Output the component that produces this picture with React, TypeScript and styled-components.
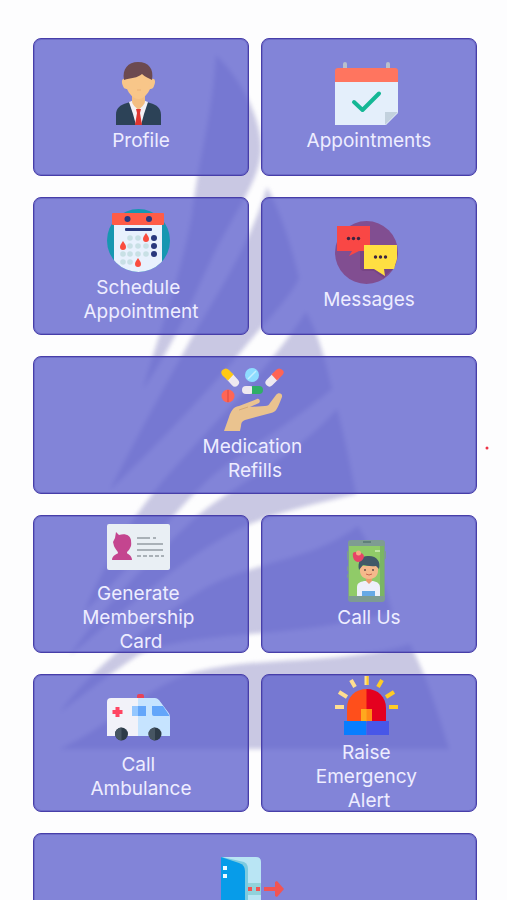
import React from "react";
import styled, { createGlobalStyle } from "styled-components";

const GlobalStyle = createGlobalStyle`
  *, *::before, *::after { box-sizing: border-box; }
  body { margin: 0; background: #fdfdfe; }
`;

const Page = styled.main`
  position: relative;
  isolation: isolate;
  height: 100vh;
  overflow-y: auto;
  scrollbar-width: none;
  padding: 38px 30px 38px 33px;
  font-family: Inter, "Noto Sans", sans-serif;
`;

const Watermark = styled.svg`
  position: absolute;
  inset: 0;
  z-index: -1;
  width: 100%;
  pointer-events: none;
`;

const Sails = styled.g`
  fill: #c9c8e3;
  filter: blur(2px);
`;

const MenuGrid = styled.nav`
  display: grid;
  grid-template-columns: repeat(2, minmax(0, 1fr));
  grid-auto-rows: 138px;
  gap: 21px 12px;
`;

const Tile = styled.button<{ $wide?: boolean }>`
  grid-column: ${({ $wide }) => ($wide ? "1 / -1" : "auto")};
  display: flex;
  align-items: center;
  justify-content: center;
  min-width: 0;
  padding: 0;
  border: 1px solid #473ea9;
  border-radius: 8px;
  background: rgba(95, 98, 205, 0.78);
  box-shadow: inset 0 0 0 1px rgba(71, 62, 169, 0.35);
  color: #eeedff;
  font: inherit;
  font-size: 19px;
  line-height: 24px;
  cursor: pointer;
`;

const TileLabel = styled.span`
  text-align: center;
  white-space: pre;
`;

const IconFrame = styled.svg`
  width: 63px;
  height: 63px;
  margin-bottom: 4px;
  vertical-align: bottom;
`;

function Icon({ children }: { children: React.ReactNode }) {
  return (
    <IconFrame viewBox="0 0 63 63" aria-hidden="true">
      {children}
    </IconFrame>
  );
}

const ProfileIcon = () => (
  <Icon>
    <path d="M9 63V53c0-7 4-10 11-12l6-2h11l6 2c7 2 11 5 11 12v10z" fill="#2c4257" />
    <path d="M22 40l5-2h9l5 2-4 12-3 11h-5l-3-11z" fill="#f4f1f6" />
    <path d="M25 33h13v6c0 4-4 6-6.500 9C29 45 25 43 25 39z" fill="#f3be82" />
    <path d="M29 47h5l-1 4 2 12h-7l2-12z" fill="#e0352f" />
    <path d="M18 17c-3-1-4 3-2 7 1 3 3 3 4 3 2 5 7 10 11.500 10S41 32 43 27c1 0 3 0 4-3 2-4 1-8-2-7l-4-7H22z" fill="#f8c689" />
    <path d="M17 18C15 7 21 0 31 0c11 0 16 7 14 18-3-2-7-3-10-6-4 4-12 4-18 6z" fill="#6c4a50" />
    <path d="M30 28h4" stroke="#eab074" strokeWidth="1" />
  </Icon>
);

const AppointmentsIcon = () => (
  <Icon>
    <path d="M8 8V2a2 2 0 0 1 4 0v6zM51 8V2a2 2 0 0 1 4 0v6z" fill="#b9bfcc" />
    <path d="M0 19h63v32L51 63H0z" fill="#e4effb" />
    <path d="M0 20V9q0-3 3-3h57q3 0 3 3v11z" fill="#ff755f" />
    <path d="M50 63V50h13z" fill="#c3d2de" />
    <path d="M19 40l8.500 8L44 31.500" fill="none" stroke="#14b795" strokeWidth="4" strokeLinecap="round" strokeLinejoin="round" />
  </Icon>
);

const scheduleDots: [number, number][] = [
  [23, 29], [31, 29], [23, 37], [31, 37], [39, 37], [16, 45],
  [23, 45], [31, 45], [39, 45], [16, 53], [23, 53],
];

const ScheduleIcon = () => (
  <Icon>
    <clipPath id="schedule-disc"><circle cx="31.500" cy="31.500" r="31.500" /></clipPath>
    <circle cx="31.500" cy="31.500" r="31.500" fill="#1697b1" />
    <path d="M7 12h48v51H7z" fill="#e8f1fd" clipPath="url(#schedule-disc)" />
    <rect x="5" y="4" width="52" height="12" rx="1" fill="#ff5c47" />
    <g fill="#28377d">
      <circle cx="20.500" cy="10" r="3" />
      <circle cx="42" cy="10" r="3" />
      <rect x="18" y="19" width="27" height="3" rx="1" />
      <circle cx="47" cy="29" r="3" />
      <circle cx="47" cy="37" r="3" />
      <circle cx="47" cy="45" r="3" />
    </g>
    <g fill="#c8e0e5">
      {scheduleDots.map(([x, y]) => <circle key={`${x}-${y}`} cx={x} cy={y} r="2.800" />)}
    </g>
    <g fill="#fa4c3e">
      <path d="M39 24c2 3 3 4 3 6a3 3 0 0 1-6 0c0-2 1-3 3-6z" />
      <path d="M16 32c2 3 3 4 3 6a3 3 0 0 1-6 0c0-2 1-3 3-6z" />
      <path d="M31 49c2 3 3 4 3 6a3 3 0 0 1-6 0c0-2 1-3 3-6z" />
    </g>
  </Icon>
);

const MessagesIcon = () => (
  <Icon>
    <clipPath id="message-disc"><circle cx="31.500" cy="31.500" r="31.500" /></clipPath>
    <circle cx="31.500" cy="31.500" r="31.500" fill="#814e91" />
    <path d="M27 25h-2v23l3 2h11l10 7 2-3 10-9V25z" fill="#6e397a" opacity=".5" clipPath="url(#message-disc)" />
    <path d="M2 5h33v25H24l-10 5 3-5H2z" fill="#f94745" />
    <path d="M29 24h33v14l-3 10H49l1 7-11-7H29z" fill="#ffdf42" />
    <g fill="#3d2440">
      <circle cx="13.500" cy="17.500" r="1.700" /><circle cx="18.500" cy="17.500" r="1.700" /><circle cx="23.500" cy="17.500" r="1.700" />
      <circle cx="40.500" cy="36" r="1.700" /><circle cx="45.500" cy="36" r="1.700" /><circle cx="50.500" cy="36" r="1.700" />
    </g>
  </Icon>
);

const MedicationIcon = () => (
  <Icon>
    <g fill="none" strokeWidth="8" strokeLinecap="round">
      <path d="M9 9l5 5.500" stroke="#eee9f0" />
      <path d="M54 9l-5.500 5.500" stroke="#eee9f0" />
      <path d="M25 22h4" stroke="#eee9f0" />
      <path d="M36 22h2" stroke="#2fae67" />
    </g>
    <path d="M7 12.500L1.500 7.500Q-1 4 1.500 2Q5-1 8 2L12.500 6.500z" fill="#ffc914" />
    <path d="M56 12.500L61.500 7Q64 4 61.500 2Q58-1 55 2L50.500 6.500z" fill="#ff6454" />
    <path d="M31 18h5v8h-5z" fill="#2fae67" />
    <circle cx="31" cy="7" r="7" fill="#8edcff" />
    <path d="M27 11l8-8" stroke="#c6efff" strokeWidth="1.500" />
    <circle cx="7" cy="28" r="6.500" fill="#ff6656" />
    <path d="M7 22v12" stroke="#d9473e" />
    <path d="M3 63l5-14c2-6 4-10 10-11l18-7c2-1 4 2 2 4l-9 4 15-1c3 0 4-1 5-3l6-8c2-3 7-2 6 2l-2 5c-3 7-4 10-9 11L24 52c-3 1-4 3-4 6l-1 5z" fill="#eac38f" />
    <path d="M18 42l9-3" stroke="#d6aa72" strokeWidth="1" />
  </Icon>
);

const MembershipIcon = () => (
  <Icon>
    <rect y="9" width="63" height="46" rx="2" fill="#e9eff4" />
    <path d="M9 17l3 3c6-2 11 0 12 5 0 3 1 5-1 8-1 3-3 3-3 5 0 1 5 2 5 7H5c0-5 6-6 6-7 0-2-3-4-4-7l-1-4 2-4z" fill="#c4458f" />
    <g stroke="#a9b1b7" strokeWidth="2" fill="none">
      <path d="M30 23h13M46 23h3M30 29h26M30 35h26" />
      <path d="M30 41h27" strokeDasharray="4 2" />
    </g>
  </Icon>
);

const PhoneIcon = () => (
  <Icon>
    <rect x="12" y="12" width="3" height="9" rx="1" fill="#7a9c91" />
    <rect x="12" y="27" width="3" height="5" rx="1" fill="#7a9c91" />
    <rect x="12" y="35" width="3" height="4" rx="1" fill="#7a9c91" />
    <rect x="48" y="12" width="3" height="8" rx="1" fill="#7a9c91" />
    <rect x="13" y="1" width="37" height="62" rx="3" fill="#7e9c92" />
    <path d="M14 7h35v50H14z" fill="#90cb68" />
    <path d="M45 7h4v50h-4z" fill="#7ab564" />
    <path d="M28 3h8" stroke="#567670" strokeWidth="1.500" />
    <path d="M40 12h5" stroke="#d1efb8" strokeWidth="1.500" />
    <path d="M22 57V48c0-4 3-5 7-6h9c5 1 7 3 7 7v8z" fill="#eef0fa" />
    <path d="M27 52h13v5H27z" fill="#67a9e6" />
    <path d="M31 37h6v5l-3 3-3-3z" fill="#e99a6d" />
    <path d="M25 27h18v5c0 5-4 8-9 8s-9-3-9-8z" fill="#f5b98b" />
    <path d="M24 31c-2-9 3-15 10-14 8 0 12 6 10 13l-3-3c-6 1-10-1-13-1z" fill="#415968" />
    <circle cx="30" cy="31" r="1" fill="#624b48" /><circle cx="38" cy="31" r="1" fill="#624b48" />
    <path d="M31 35q3 2 6 0" fill="none" stroke="#c9664f" />
    <path d="M18 14c2-2 4-1 5 1 2-2 5-1 6 2 0 3-3 6-6 6s-6-4-5-9z" fill="#e74467" />
    <circle cx="23.500" cy="14" r="2.500" fill="#f5aa84" />
  </Icon>
);

const AmbulanceIcon = () => (
  <Icon>
    <path d="M30 13v-3q0-2 2-2h3q2 0 2 2v3z" fill="#e74357" />
    <path d="M0 50V16q0-4 4-4h28v38z" fill="#f2f2f9" />
    <path d="M31 12h17q2 0 4 2l9 12q2 2 2 5v19H31z" fill="#c6e4ff" />
    <path d="M25 20h6v10h-6z" fill="#94c7ff" />
    <path d="M31 20h8v10h-8zM45 20h11l6 9v1H47q-2 0-2-2z" fill="#63a6fa" />
    <path d="M8.500 21h4v3h3v4h-3v3h-4v-3h-3v-4h3z" fill="#ff4563" />
    <circle cx="14.500" cy="48" r="6.500" fill="#2d3b48" /><circle cx="48" cy="48" r="6.500" fill="#2d3b48" />
    <path d="M14.500 41.500a6.500 6.500 0 0 0 0 13zM48 41.500a6.500 6.500 0 0 0 0 13z" fill="#465562" />
  </Icon>
);

const SirenIcon = () => (
  <Icon>
    <path d="M12 48V34c0-11 8-19 20-19v33z" fill="#ff4f1b" />
    <path d="M31.500 15C43 15 51 23 51 34v14H31.500z" fill="#e4001f" />
    <path d="M26 35h6v13h-6z" fill="#ffa91e" /><path d="M31.500 35H37v13h-5.500z" fill="#ff8a17" />
    <path d="M9 47h22.500v14H9z" fill="#087eff" /><path d="M31.500 47H54v14H31.500z" fill="#4857e8" />
    <g strokeWidth="4" fill="none">
      <path d="M0 33h9M4 18l8 5M16 6l4 7M31.500 2v9" stroke="#ffdf91" />
      <path d="M63 33h-9M59 18l-8 5M47 6l-4 7" stroke="#ffcc25" />
    </g>
    <path d="M31.500 2h2v9h-2z" fill="#ffcc25" />
  </Icon>
);

const ExitIcon = () => (
  <Icon>
    <path d="M0 0h35q5 0 5 5v58H10z" fill="#b9e5f4" />
    <path d="M23 26h17v12H23z" fill="#91d2db" />
    <path d="M1 0l22 5q4 2 4 7v51H8z" fill="#7dcbe0" />
    <path d="M0 0l18 6q6 2 6 8v49H0z" fill="#079ce9" />
    <path d="M2 9h4v4H2zM2 17h4v4H2z" fill="#edfaff" />
    <path d="M27 30h4v4h-4zM35 30h4v4h-4zM43 30h11v-5l2-1 7 8-7 8-2-1v-5H43z" fill="#f15454" />
  </Icon>
);

type MenuItem = { label: string; icon: React.ComponentType; wide?: boolean };

const items: MenuItem[] = [
  { label: "Profile", icon: ProfileIcon },
  { label: "Appointments", icon: AppointmentsIcon },
  { label: "Schedule \nAppointment", icon: ScheduleIcon },
  { label: "Messages", icon: MessagesIcon },
  { label: "Medication \nRefills", icon: MedicationIcon, wide: true },
  { label: "Generate \nMembership \nCard", icon: MembershipIcon },
  { label: "Call Us", icon: PhoneIcon },
  { label: "Call \nAmbulance", icon: AmbulanceIcon },
  { label: "Raise \nEmergency \nAlert", icon: SirenIcon },
  { label: "Logout", icon: ExitIcon, wide: true },
];

export default function App() {
  return (
    <>
      <GlobalStyle />
      <Page>
        <Watermark viewBox="0 0 507 900" aria-hidden="true">
          <Sails>
            <path d="M216 55C240 78 262 118 261 150C260 182 232 215 210 262C192 300 174 345 143 389C158 335 180 280 192 215C198 160 212 120 216 55Z" />
            <path d="M267 187C280 212 290 240 299 278C292 296 262 325 234 360C200 400 152 450 110 490C135 440 160 395 192 337C215 298 250 245 267 187Z" />
            <path d="M306 312C320 336 326 365 332 389C300 416 262 440 225 466C190 490 140 560 84 612C100 575 120 535 150 497C190 445 258 385 306 312Z" />
            <path d="M337 409C345 438 350 465 356 494C320 503 285 510 250 524C190 550 125 610 70 655C105 605 145 565 195 518C232 485 292 460 337 409Z" />
            <path d="M358 526C374 552 385 584 392 612C345 625 300 630 250 634C205 638 165 642 140 654C112 672 82 696 60 712C92 668 150 622 205 588C256 560 310 562 358 526Z" />
            <path d="M410 644C426 675 438 712 449 749H60C105 728 145 690 185 675C245 655 340 666 410 644Z" />
          </Sails>
          <circle cx="487" cy="448" r="1.500" fill="#ee3346" />
        </Watermark>
        <MenuGrid aria-label="Main menu">
          {items.map(({ label, icon: TileIcon, wide }) => (
            <Tile key={label} type="button" $wide={wide}>
              <TileLabel>
                <TileIcon />
                {" \n"}
                {label}
              </TileLabel>
            </Tile>
          ))}
        </MenuGrid>
      </Page>
    </>
  );
}
